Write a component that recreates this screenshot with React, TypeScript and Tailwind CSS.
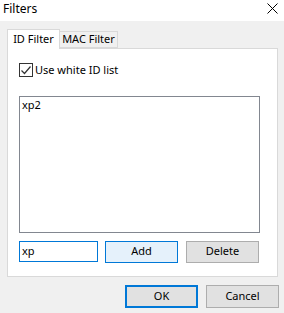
const font = { fontFamily: '"Noto Sans", "Open Sans", sans-serif' };

export default function App() {
  return (
    <div className="w-[284px] h-[313px] bg-[#f0f0f0] flex flex-col text-[11px] text-black overflow-hidden whitespace-nowrap" style={font}>
      {/* title bar */}
      <div className="h-[21px] bg-white flex items-center justify-between pl-[3px] pr-[6px]">
        <span className="text-[12px] leading-none -mt-[4px]">Filters</span>
        <svg width="11" height="11" viewBox="0 0 11 11" className="-mt-[4px]">
          <path d="M0.5 0.5 L10.5 10.5 M10.5 0.5 L0.5 10.5" stroke="#000" strokeWidth="1" />
        </svg>
      </div>

      {/* tabs */}
      <div className="mt-[8px] ml-[7px] flex items-end h-[20px] relative z-10">
        <div className="h-[20px] w-[53px] bg-white border border-b-0 border-[#d9d9d9] flex items-center justify-center">
          ID Filter
        </div>
        <div className="h-[17px] w-[58px] bg-[#f0f0f0] border border-l-0 border-[#d9d9d9] flex items-center justify-center mb-[1px]">
          MAC Filter
        </div>
      </div>

      {/* panel */}
      <div className="ml-[7px] w-[271px] h-[229px] -mt-[1px] bg-white border border-[#d9d9d9] pl-[11px] pt-[14px]">
        <label className="flex items-center gap-[2px] h-[14px]">
          <span className="w-[14px] h-[14px] border border-[#333] flex items-center justify-center">
            <svg width="12" height="12" viewBox="0 0 12 12">
              <path d="M1.5 6.5 L4.5 9.5 L10.5 2.5" fill="none" stroke="#333" strokeWidth="1.2" />
            </svg>
          </span>
          <span>Use white ID list</span>
        </label>

        <div className="mt-[19px] w-[241px] h-[137px] border border-[#828790] px-[2px] leading-[16px]">xp2</div>

        <div className="mt-[8px] flex items-center h-[21px]">
          <div className="w-[79px] h-[21px] border border-[#0078d7] flex items-center pl-[2px]">xp</div>
          <div className="ml-[7px] w-[73px] h-[22px] border border-[#0078d7] bg-[#e5f1fb] flex items-center justify-center">Add</div>
          <div className="ml-[8px] w-[73px] h-[22px] border border-[#adadad] bg-[#e1e1e1] flex items-center justify-center">Delete</div>
        </div>
      </div>

      {/* dialog buttons */}
      <div className="mt-[8px] flex justify-end pr-[5px] gap-[8px]">
        <div className="w-[73px] h-[23px] border-2 border-[#0078d7] bg-[#e1e1e1] flex items-center justify-center">OK</div>
        <div className="w-[73px] h-[23px] border border-[#adadad] bg-[#e1e1e1] flex items-center justify-center">Cancel</div>
      </div>
    </div>
  );
}
